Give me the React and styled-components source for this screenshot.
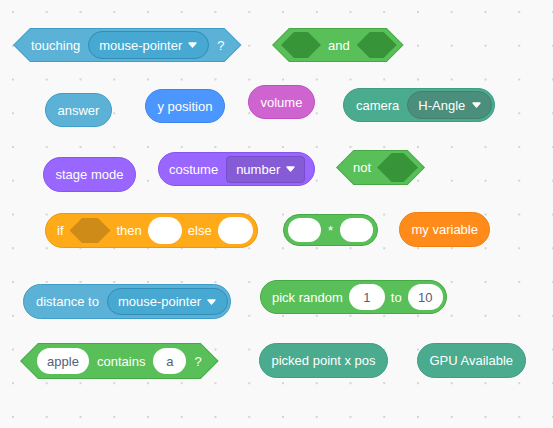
import React from "react";
import styled, { createGlobalStyle } from "styled-components";

const palette = {
  sensing: { fill: "#5cb1d6", edge: "#3f9ec9", field: "#47a8d1", fieldEdge: "#2e8eb8" },
  operators: { fill: "#59c059", edge: "#46a946", slot: "#389438" },
  motion: { fill: "#4c97ff", edge: "#3f86ec" },
  sound: { fill: "#cf63cf", edge: "#c24fc2" },
  looks: { fill: "#9966ff", edge: "#8655ee", field: "#855cd6", fieldEdge: "#774dcb" },
  control: { fill: "#ffab19", edge: "#e69a14", slot: "#cf8b17" },
  data: { fill: "#ff8c1a", edge: "#f07f10" },
  ext: { fill: "#4aab8f", edge: "#409d82", field: "#4b8e7b", fieldEdge: "#3f8270" },
};

const GlobalStyle = createGlobalStyle`
  body {
    margin: 0;
    background: #f9f9f9;
    font-family: "Liberation Sans", Arial, sans-serif;
  }
`;

const Workspace = styled.div`
  position: relative;
  width: 553px;
  height: 428px;
  overflow: hidden;
  background-color: #f9f9f9;
  background-image: radial-gradient(circle, #d4d4d4 0.8px, transparent 1.3px);
  background-size: 33.75px 33.75px;
  background-position: -3.9px -4.9px;
`;

// blocks sit at their own place on the scripting canvas
const Spot = styled.div`
  position: absolute;
  left: ${(p) => p.$x}px;
  top: ${(p) => p.$y}px;
`;

const Reporter = styled.div`
  display: inline-flex;
  align-items: center;
  gap: ${(p) => p.$gap ?? 7}px;
  box-sizing: border-box;
  height: ${(p) => p.$h ?? 34}px;
  padding: 0 ${(p) => p.$pr ?? 11.5}px 0 ${(p) => p.$pl ?? 11.5}px;
  border-radius: 999px;
  background: ${(p) => p.$c.fill};
  border: 1px solid ${(p) => p.$c.edge};
  color: #fff;
  font-size: 13px;
  line-height: 1;
  white-space: nowrap;
`;

const hexPath = (pt) =>
  `polygon(${pt}px 0, calc(100% - ${pt}px) 0, 100% 50%, calc(100% - ${pt}px) 100%, ${pt}px 100%, 0 50%)`;

const Predicate = styled.div`
  position: relative;
  isolation: isolate;
  display: inline-flex;
  align-items: center;
  gap: ${(p) => p.$gap ?? 8}px;
  height: ${(p) => p.$h ?? 34}px;
  padding: 0 ${(p) => p.$pr ?? 17}px 0 ${(p) => p.$pl ?? 17}px;
  color: #fff;
  font-size: 13px;
  line-height: 1;
  white-space: nowrap;

  &::before,
  &::after {
    content: "";
    position: absolute;
    z-index: -1;
  }
  &::before {
    inset: 0;
    background: ${(p) => p.$c.edge};
    clip-path: ${(p) => hexPath((p.$h ?? 34) / 2)};
  }
  &::after {
    inset: 1px 1.4px;
    background: ${(p) => p.$c.fill};
    clip-path: ${(p) => hexPath((p.$h ?? 34) / 2 - 1)};
  }
`;

const HexSlot = styled.span`
  display: block;
  width: ${(p) => p.$w}px;
  height: ${(p) => p.$h}px;
  background: ${(p) => p.$color};
  clip-path: ${(p) => hexPath(p.$h / 2)};
`;

const Field = styled.span`
  display: inline-flex;
  align-items: center;
  justify-content: center;
  box-sizing: border-box;
  min-width: ${(p) => p.$w ?? 0}px;
  height: ${(p) => p.$h ?? 26}px;
  padding: 0 10px;
  border-radius: 999px;
  background: #fff;
  color: #575e75;
  font-size: 13px;
`;

const Dropdown = styled.span`
  display: inline-flex;
  align-items: center;
  gap: ${(p) => p.$gap ?? 7}px;
  box-sizing: border-box;
  height: ${(p) => p.$h ?? 28}px;
  padding: 0 ${(p) => p.$pr ?? 11}px 0 ${(p) => p.$pl ?? 10}px;
  border-radius: ${(p) => (p.$square ? "4px" : "999px")};
  background: ${(p) => p.$c.field};
  border: 1px solid ${(p) => p.$c.fieldEdge};
  color: #fff;
`;

const Caret = () => (
  <svg width="9" height="6" viewBox="0 0 9 6">
    <path d="M1 1 L8 1 L4.5 5 Z" fill="#fff" stroke="#fff" strokeWidth="1.3" strokeLinejoin="round" />
  </svg>
);

export default function App() {
  const { sensing, operators, motion, sound, looks, control, data, ext } = palette;
  return (
    <>
      <GlobalStyle />
      <Workspace>
        <Spot $x={13} $y={28}>
          <Predicate $c={sensing} $pl={18} $pr={17}>
            <span>touching</span>
            <Dropdown $c={sensing} $gap={6}>
              mouse-pointer <Caret />
            </Dropdown>
            <span>?</span>
          </Predicate>
        </Spot>

        <Spot $x={272} $y={28}>
          <Predicate $c={operators} $pl={9} $pr={7} $gap={7}>
            <HexSlot $w={40} $h={26} $color={operators.slot} />
            <span>and</span>
            <HexSlot $w={40} $h={26} $color={operators.slot} />
          </Predicate>
        </Spot>

        <Spot $x={45} $y={93}>
          <Reporter $c={sensing}>answer</Reporter>
        </Spot>
        <Spot $x={145} $y={89}>
          <Reporter $c={motion}>y position</Reporter>
        </Spot>
        <Spot $x={248} $y={85}>
          <Reporter $c={sound}>volume</Reporter>
        </Spot>
        <Spot $x={343} $y={88}>
          <Reporter $c={ext} $pl={12} $pr={2} $gap={8}>
            <span>camera</span>
            <Dropdown $c={ext} $gap={7} $pr={10}>
              H-Angle <Caret />
            </Dropdown>
          </Reporter>
        </Spot>

        <Spot $x={43} $y={157}>
          <Reporter $c={looks} $h={35}>stage mode</Reporter>
        </Spot>
        <Spot $x={158} $y={152}>
          <Reporter $c={looks} $h={34} $pl={10} $pr={9} $gap={8}>
            <span>costume</span>
            <Dropdown $c={looks} $square $h={27} $gap={6} $pl={9} $pr={9}>
              number <Caret />
            </Dropdown>
          </Reporter>
        </Spot>
        <Spot $x={336} $y={150}>
          <Predicate $c={operators} $h={35} $pl={17} $pr={7} $gap={6}>
            <span>not</span>
            <HexSlot $w={41} $h={29} $color={operators.slot} />
          </Predicate>
        </Spot>

        <Spot $x={45} $y={213}>
          <Reporter $c={control} $h={35} $pl={11} $pr={4} $gap={6}>
            <span>if</span>
            <HexSlot $w={41} $h={25} $color={control.slot} />
            <span>then</span>
            <Field $w={34} $h={27} />
            <span>else</span>
            <Field $w={35} $h={27} />
          </Reporter>
        </Spot>
        <Spot $x={283} $y={214}>
          <Reporter $c={operators} $h={32} $pl={4} $pr={4} $gap={7}>
            <Field $w={33} $h={24} />
            <span>*</span>
            <Field $w={33} $h={24} />
          </Reporter>
        </Spot>
        <Spot $x={399} $y={212}>
          <Reporter $c={data} $h={35}>my variable</Reporter>
        </Spot>

        <Spot $x={23} $y={284}>
          <Reporter $c={sensing} $h={35} $pl={12} $pr={2} $gap={8}>
            <span>distance to</span>
            <Dropdown $c={sensing} $h={27} $gap={6}>
              mouse-pointer <Caret />
            </Dropdown>
          </Reporter>
        </Spot>
        <Spot $x={260} $y={280}>
          <Reporter $c={operators} $pl={11} $pr={3} $gap={6}>
            <span>pick random</span>
            <Field $w={36}>1</Field>
            <span>to</span>
            <Field $w={35}>10</Field>
          </Reporter>
        </Spot>

        <Spot $x={20} $y={343}>
          <Predicate $c={operators} $h={36} $pl={17} $pr={17} $gap={8}>
            <Field $w={52}>apple</Field>
            <span>contains</span>
            <Field $w={33}>a</Field>
            <span>?</span>
          </Predicate>
        </Spot>
        <Spot $x={259} $y={343}>
          <Reporter $c={ext} $h={35}>picked point x pos</Reporter>
        </Spot>
        <Spot $x={417} $y={343}>
          <Reporter $c={ext} $h={35}>GPU Available</Reporter>
        </Spot>
      </Workspace>
    </>
  );
}
